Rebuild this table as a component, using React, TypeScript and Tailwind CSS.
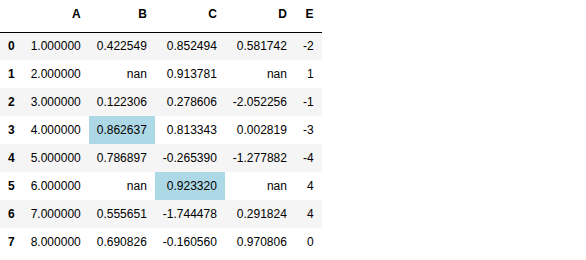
import React from 'react';

const columns = ['A', 'B', 'C', 'D', 'E'];

const rows: string[][] = [
  ['1.000000', '0.422549', '0.852494', '0.581742', '-2'],
  ['2.000000', 'nan', '0.913781', 'nan', '1'],
  ['3.000000', '0.122306', '0.278606', '-2.052256', '-1'],
  ['4.000000', '0.862637', '0.813343', '0.002819', '-3'],
  ['5.000000', '0.786897', '-0.265390', '-1.277882', '-4'],
  ['6.000000', 'nan', '0.923320', 'nan', '4'],
  ['7.000000', '0.555651', '-1.744478', '0.291824', '4'],
  ['8.000000', '0.690826', '-0.160560', '0.970806', '0'],
];

// cells that got the max highlight
const highlighted: Record<string, boolean> = { '3-1': true, '5-2': true };

const App = () => {
  return (
    <div className="w-[586px] h-[260px] bg-white font-['Liberation_Sans',Arial,sans-serif] text-[12px] text-black">
      <table className="border-collapse">
        <thead>
          <tr className="h-[32px] border-b border-black">
            <th className="px-2 pb-[9px] align-bottom"></th>
            {columns.map((c) => (
              <th key={c} className="px-2 pb-[9px] align-bottom text-right font-bold">
                {c}
              </th>
            ))}
          </tr>
        </thead>
        <tbody>
          {rows.map((row, i) => (
            <tr key={i} className={`h-[28px] ${i % 2 === 0 ? 'bg-[#f5f5f5]' : 'bg-white'}`}>
              <th className="px-2 text-left font-bold">{i}</th>
              {row.map((v, j) => (
                <td
                  key={j}
                  className={`px-2 text-right ${highlighted[`${i}-${j}`] ? 'bg-[#add8e6]' : ''}`}
                >
                  {v}
                </td>
              ))}
            </tr>
          ))}
        </tbody>
      </table>
    </div>
  );
};

export default App;
